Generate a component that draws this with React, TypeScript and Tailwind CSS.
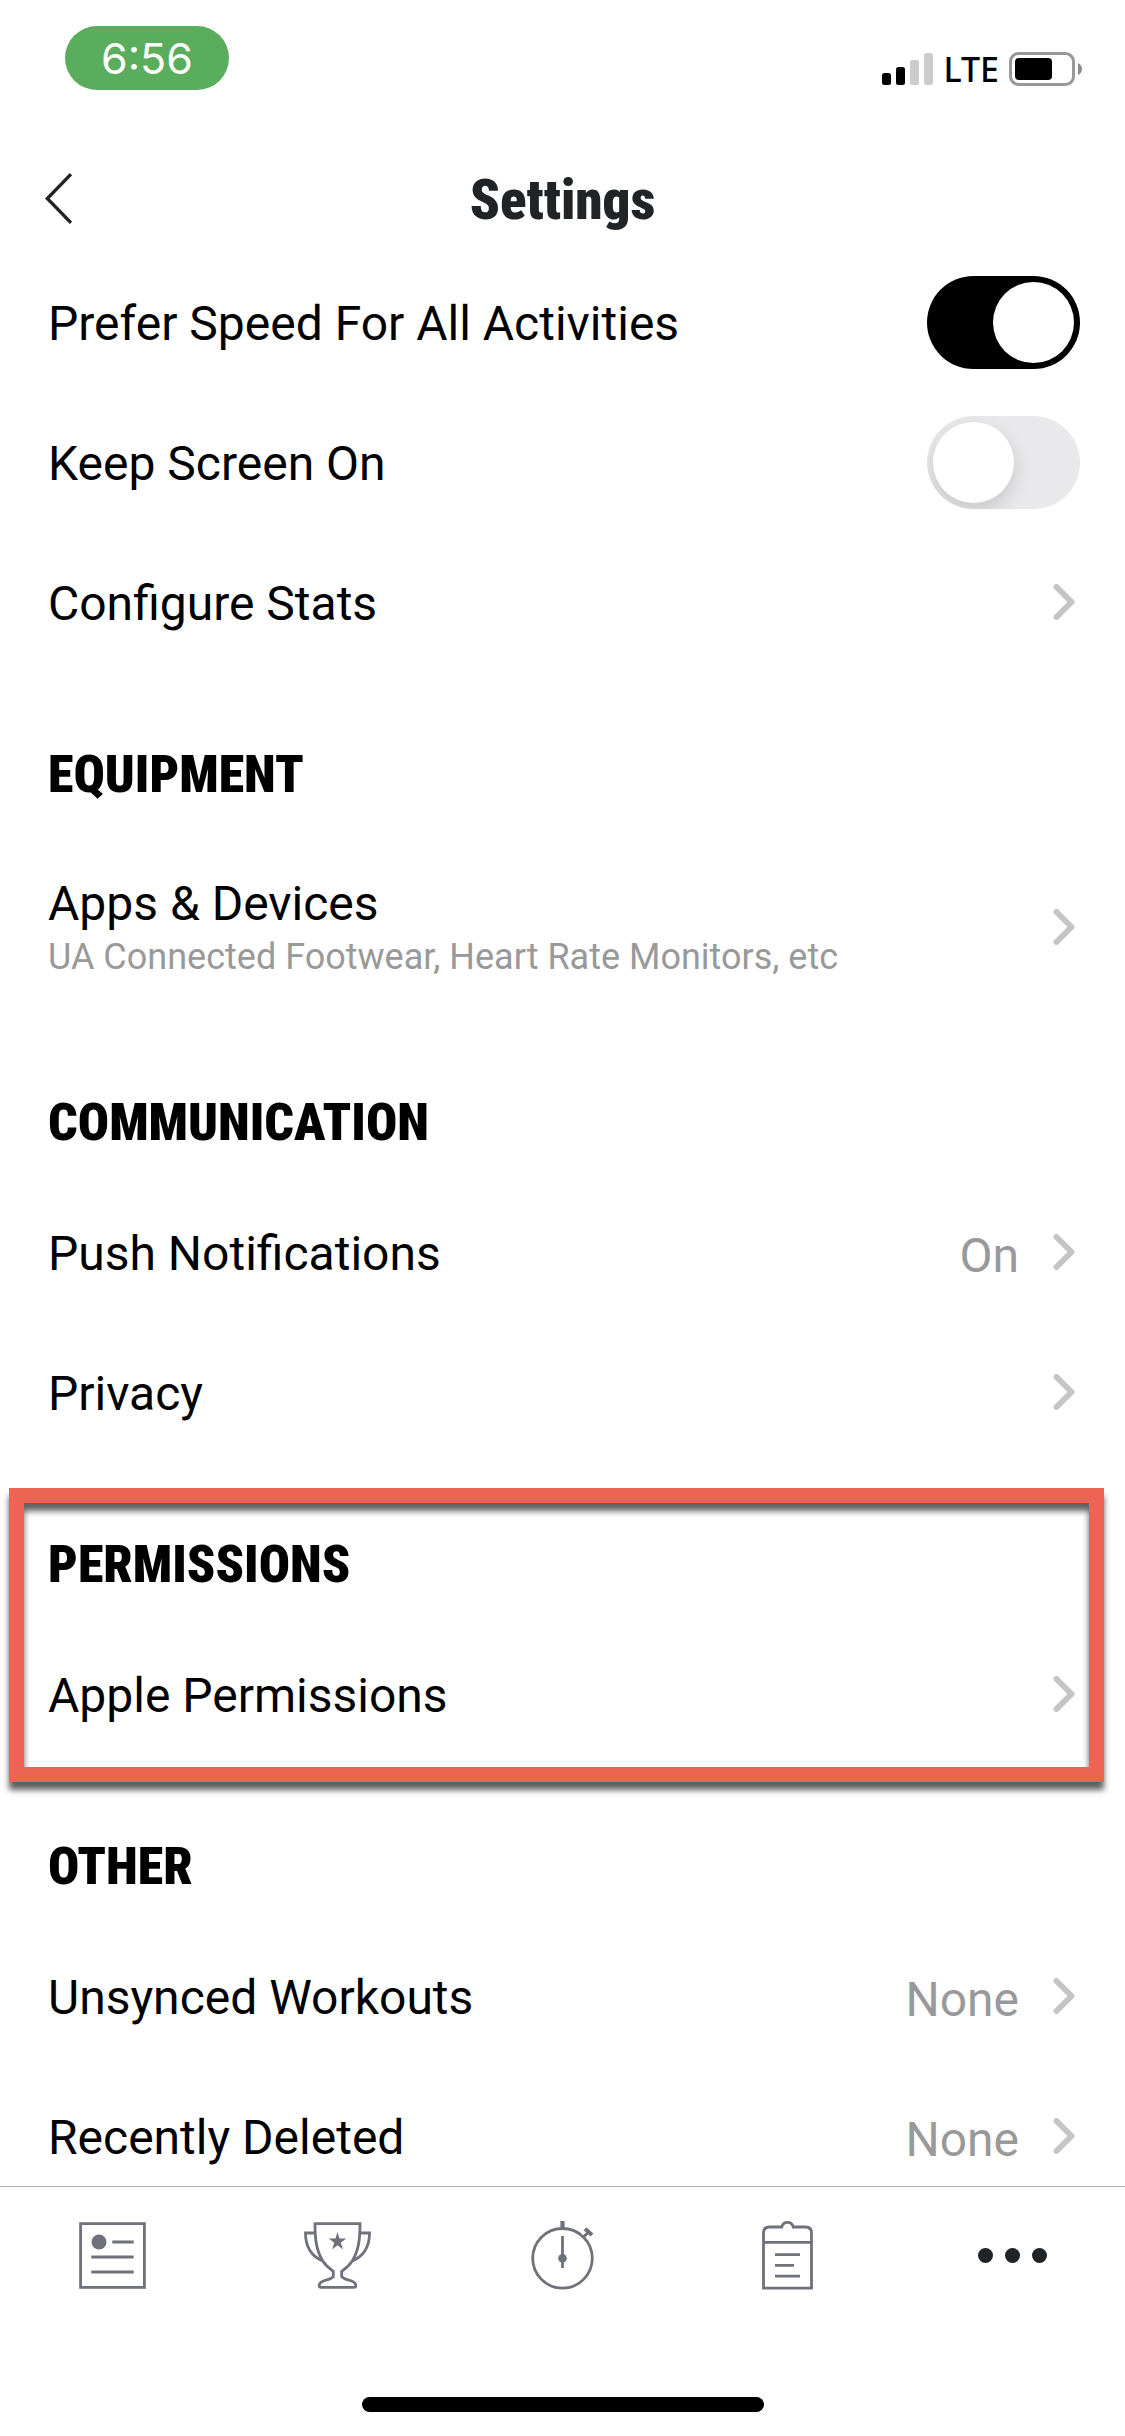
import { useState, type ReactNode } from "react";

function Chevron() {
  return (
    <svg viewBox="0 0 22 36" className="h-9 w-[22px] shrink-0" fill="none" stroke="#c5c5c7" strokeWidth="6" strokeLinecap="round" strokeLinejoin="round" aria-hidden="true">
      <path d="M3.5 3 18.5 18 3.5 33" />
    </svg>
  );
}

function SectionTitle({ children }: { children: ReactNode }) {
  return (
    <h2 className="flex h-[162px] items-end px-12 pb-[26px] font-['Roboto_Condensed','Liberation_Sans_Narrow',Roboto,sans-serif] text-[52px] leading-[66px] font-black">
      {children}
    </h2>
  );
}

function LinkRow({ label, detail, value }: { label: string; detail?: string; value?: string }) {
  return (
    <a href="#" className={`flex items-center gap-[34px] pr-[50px] pl-12 ${detail ? "h-[186px]" : "h-[140px]"}`}>
      <span className="flex flex-1 flex-col pt-1 whitespace-nowrap">
        <span className="text-[48px] leading-[56px]">{label}</span>
        {detail && <span className="text-[36px] leading-[50px] text-[#999999]">{detail}</span>}
      </span>
      {value && <span className="pt-2 text-[48px] leading-[56px] text-[#999999]">{value}</span>}
      <Chevron />
    </a>
  );
}

function SwitchRow({ label, initial }: { label: string; initial: boolean }) {
  const [on, setOn] = useState(initial);
  return (
    <label className="flex h-[140px] items-center justify-between pr-[45px] pl-12">
      <span className="pt-1 text-[48px] leading-[56px] whitespace-nowrap">{label}</span>
      <input type="checkbox" role="switch" className="peer sr-only" checked={on} onChange={(e) => setOn(e.target.checked)} />
      <span className="flex h-[93px] w-[153px] overflow-hidden rounded-full bg-[#e9e9eb] p-[6px] peer-checked:justify-end peer-checked:bg-black">
        <span className="size-[81px] rounded-full bg-white shadow-[0_8px_20px_rgba(0,0,0,0.15)]" />
      </span>
    </label>
  );
}

const iconClass = "size-[75px]";

function FeedIcon() {
  return (
    <svg viewBox="0 0 75 75" className={iconClass} fill="none" stroke="#6f717b" strokeWidth="2.8" aria-hidden="true">
      <rect x="5.6" y="5.6" width="63.8" height="63.8" />
      <circle cx="24" cy="24" r="7.5" fill="#6f717b" stroke="none" />
      <path d="M37.3 24H58.7M16.3 39H58.7M16.3 54H58.7" />
    </svg>
  );
}

function TrophyIcon() {
  return (
    <svg viewBox="0 0 75 75" className={iconClass} fill="none" stroke="#6f717b" strokeWidth="2.8" aria-hidden="true">
      <path d="M15 5.7H60C60 20 59 32 52.3 43C49 48 45 51 41.7 53.3V58.7C44 61.5 48 61.5 51.7 63C54.5 64.2 56 65.5 55.8 67.6C55.8 68.8 55 69.3 54 69.3H21C20 69.3 19.2 68.8 19.2 67.6C19 65.5 20.5 64.2 23.3 63C27 61.5 31 61.5 33.3 58.7V53.3C30 51 26 48 22.7 43C16 32 15 20 15 5.7Z" />
      <path d="M15.5 15H5.5C5.5 28 11 38 22.7 43M59.5 15H69.5C69.5 28 64 38 52.3 43" />
      <path d="M37.5 14 39.5 20.6H46.2L40.8 24.7 42.9 31.4 37.5 27.3 32.1 31.4 34.2 24.7 28.8 20.6H35.5Z" fill="#6f717b" stroke="none" />
    </svg>
  );
}

function StopwatchIcon() {
  return (
    <svg viewBox="0 0 75 75" className={iconClass} fill="none" stroke="#6f717b" strokeWidth="2.8" aria-hidden="true">
      <circle cx="37.5" cy="40.3" r="29.8" />
      <path d="M37.5 18V50M58.5 19 64 13.5" />
      <path d="M37.5 3V10M60 10.8 67 17" strokeWidth="4.2" />
      <circle cx="37.5" cy="40.3" r="4.3" fill="#6f717b" stroke="none" />
    </svg>
  );
}

function ClipboardIcon() {
  return (
    <svg viewBox="0 0 75 75" className={iconClass} fill="none" stroke="#6f717b" strokeWidth="2.8" aria-hidden="true">
      <path d="M13.5 70.2V15Q13.5 9 19.5 9H31.8C33 2.8 42 2.8 43.2 9H55.5Q61.5 9 61.5 15V70.2ZM13.5 24.3H61.5" />
      <path d="M25 36.7H50M25 47.3H44M25 58.2H50" />
    </svg>
  );
}

function MoreIcon() {
  return (
    <svg viewBox="0 0 75 75" className={iconClass} fill="#202427" aria-hidden="true">
      <circle cx="10.5" cy="37.5" r="7.5" />
      <circle cx="37.5" cy="37.5" r="7.5" />
      <circle cx="64.5" cy="37.5" r="7.5" />
    </svg>
  );
}

const tabs = [
  { name: "Feed", icon: <FeedIcon /> },
  { name: "Challenges", icon: <TrophyIcon /> },
  { name: "Record", icon: <StopwatchIcon /> },
  { name: "Training", icon: <ClipboardIcon /> },
  { name: "More", icon: <MoreIcon /> },
];

export default function App() {
  return (
    <div className="flex h-screen flex-col bg-white font-[Roboto,sans-serif] text-black">
      <div className="flex h-[116px] shrink-0 items-start justify-between pt-[26px] pr-[43px] pl-[65px]">
        <div className="flex h-16 w-[164px] items-center justify-center rounded-[32px] bg-[#5aad5c] font-[Inter,sans-serif] text-[43px] text-white">
          6:56
        </div>
        <div className="flex items-center pt-[18px]">
          <svg viewBox="0 0 51 32" className="h-8 w-[51px]" aria-label="Signal strength">
            <rect x="0" y="20" width="9" height="12" rx="2.5" />
            <rect x="14" y="14" width="9" height="18" rx="2.5" />
            <rect x="28" y="7" width="9" height="25" rx="2.5" fill="#cccccc" />
            <rect x="42" y="0" width="9" height="32" rx="2.5" fill="#cccccc" />
          </svg>
          <span className="mx-[10px] font-['Noto_Sans',sans-serif] text-[34px] leading-[50px] font-medium">LTE</span>
          <svg viewBox="0 0 73 34" className="h-[34px] w-[73px]" aria-label="Battery">
            <rect x="1.5" y="1.5" width="63" height="31" rx="8" fill="none" stroke="#999999" strokeWidth="3" />
            <rect x="6" y="6" width="37" height="22" rx="4" />
            <path d="M69 11Q73 13 73 17T69 23Z" fill="#8c8c8c" />
          </svg>
        </div>
      </div>

      <header className="grid h-[136px] shrink-0 grid-cols-[1fr_auto_1fr] items-start px-[45px] text-[#202427]">
        <button type="button" aria-label="Back" className="w-fit pt-[57px]">
          <svg viewBox="0 0 27 51" className="h-[51px] w-[27px]" fill="none" stroke="currentColor" strokeWidth="3.4" aria-hidden="true">
            <path d="M26 1.2 2.3 25.5 26 49.8" />
          </svg>
        </button>
        <h1 className="pt-[54px] font-['Roboto_Condensed',Roboto,sans-serif] text-[55px] leading-[60px] font-black">Settings</h1>
      </header>

      <main className="min-h-0 flex-1 overflow-y-auto [scrollbar-width:none]">
        <section>
          <SwitchRow label="Prefer Speed For All Activities" initial={true} />
          <SwitchRow label="Keep Screen On" initial={false} />
          <LinkRow label="Configure Stats" />
        </section>
        <section>
          <SectionTitle>EQUIPMENT</SectionTitle>
          <LinkRow label="Apps &amp; Devices" detail="UA Connected Footwear, Heart Rate Monitors, etc" />
        </section>
        <section>
          <SectionTitle>COMMUNICATION</SectionTitle>
          <LinkRow label="Push Notifications" value="On" />
          <LinkRow label="Privacy" />
        </section>
        <section className="relative">
          <SectionTitle>PERMISSIONS</SectionTitle>
          <LinkRow label="Apple Permissions" />
          <div className="pointer-events-none absolute top-[26px] right-[21px] -bottom-[18px] left-[9px] border-[15px] border-[#ee6454] shadow-[0_8px_6px_#606060,inset_0_8px_6px_#606060]" />
        </section>
        <section>
          <SectionTitle>OTHER</SectionTitle>
          <LinkRow label="Unsynced Workouts" value="None" />
          <LinkRow label="Recently Deleted" value="None" />
        </section>
      </main>

      <footer className="flex h-[250px] shrink-0 flex-col items-center justify-between border-t border-[#b2b2b2] bg-white pt-[31px] pb-6">
        <nav className="grid w-full grid-cols-5">
          {tabs.map((tab) => (
            <button key={tab.name} type="button" aria-label={tab.name} className="flex justify-center">
              {tab.icon}
            </button>
          ))}
        </nav>
        <div className="h-[15px] w-[402px] rounded-full bg-black" />
      </footer>
    </div>
  );
}
